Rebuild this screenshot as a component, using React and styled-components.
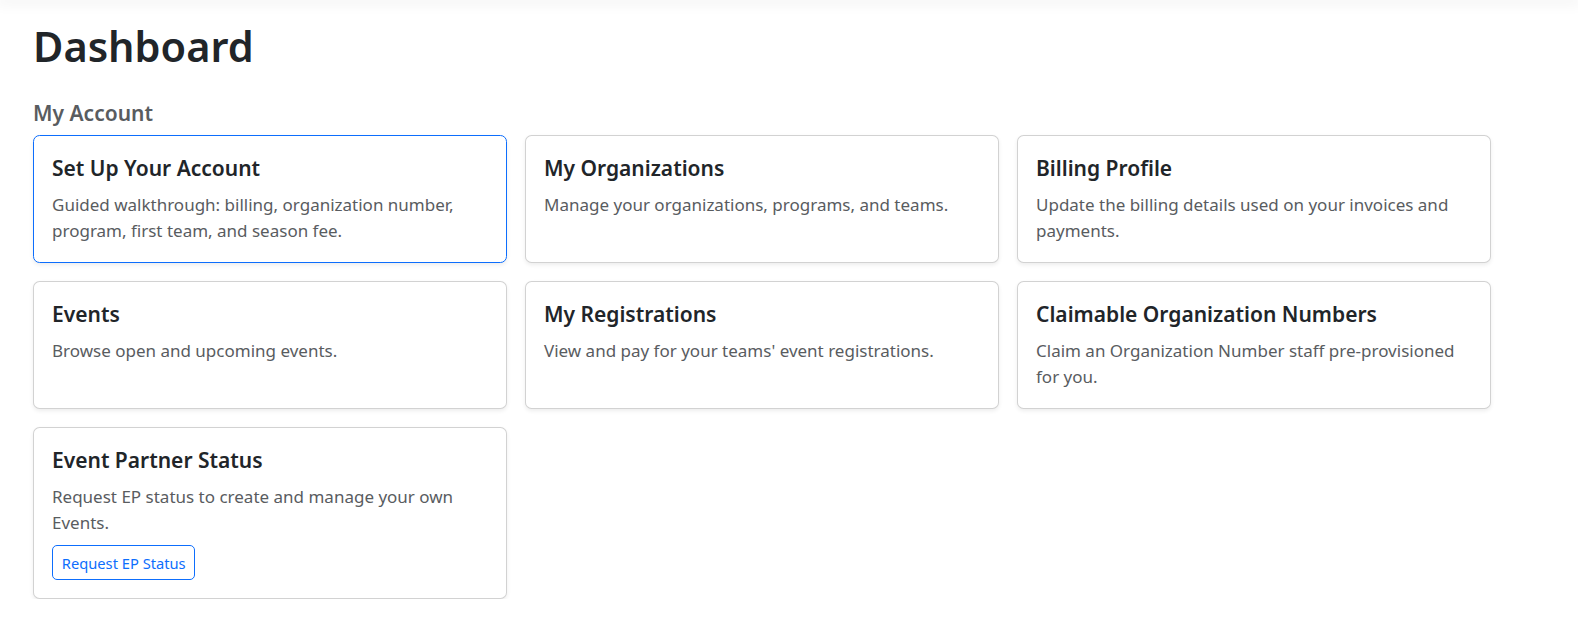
import React from 'react';
import styled, { createGlobalStyle } from 'styled-components';

const GlobalStyle = createGlobalStyle`
    * {
        box-sizing: border-box;
    }

    body {
        margin: 0;
        background: #fff;
        color: #212529;
        font-family: 'Segoe UI', 'Noto Sans', 'Open Sans', sans-serif;
        font-size: 17px;
        line-height: 1.5;
    }
`;

const cards = [
    {
        title: 'Set Up Your Account',
        text: 'Guided walkthrough: billing, organization number, program, first team, and season fee.',
        active: true
    },
    {
        title: 'My Organizations',
        text: 'Manage your organizations, programs, and teams.'
    },
    {
        title: 'Billing Profile',
        text: 'Update the billing details used on your invoices and payments.'
    },
    {
        title: 'Events',
        text: 'Browse open and upcoming events.'
    },
    {
        title: 'My Registrations',
        text: "View and pay for your teams' event registrations."
    },
    {
        title: 'Claimable Organization Numbers',
        text: 'Claim an Organization Number staff pre-provisioned for you.'
    },
    {
        title: 'Event Partner Status',
        text: 'Request EP status to create and manage your own Events.',
        action: 'Request EP Status'
    }
];

const App = () => {
    return (
        <>
            <GlobalStyle />
            <TopShadow />
            <Page>
                <PageTitle>Dashboard</PageTitle>
                <SectionTitle>My Account</SectionTitle>
                <CardGrid>
                    {cards.map((card) => (
                        <Card key={card.title} $active={card.active}>
                            <CardTitle>{card.title}</CardTitle>
                            <CardText>{card.text}</CardText>
                            {card.action && (
                                <OutlineButton type="button">{card.action}</OutlineButton>
                            )}
                        </Card>
                    ))}
                </CardGrid>
            </Page>
        </>
    );
};

export default App;

const TopShadow = styled.div`
    height: 0;
    box-shadow: 0 0 14px 4px rgba(0, 0, 0, 0.06);
`;

const Page = styled.main`
    padding: 19px 33px 0;
`;

const PageTitle = styled.h1`
    margin: 0 0 26px;
    font-size: 41.5px;
    font-weight: 600;
    line-height: 55px;
    color: #212529;
`;

const SectionTitle = styled.h5`
    margin: 0 0 8px;
    font-size: 21px;
    font-weight: 600;
    line-height: 27px;
    color: #595c5f;
`;

const CardGrid = styled.div`
    display: grid;
    grid-template-columns: repeat(3, 474px);
    gap: 18px;
`;

const Card = styled.div`
    display: flex;
    flex-direction: column;
    align-items: flex-start;
    padding: 18px 18px 17px;
    background: #fff;
    border: 1px solid ${(props) => (props.$active ? '#0d6efd' : 'rgba(0, 0, 0, 0.175)')};
    border-radius: 6.6px;
    box-shadow: 0 2px 4px rgba(0, 0, 0, 0.075);
`;

const CardTitle = styled.h5`
    margin: 0 0 10px;
    font-size: 21px;
    font-weight: 600;
    line-height: 28px;
    color: #212529;
`;

const CardText = styled.p`
    margin: 0;
    font-size: 17px;
    line-height: 26.4px;
    color: #595c5f;
`;

const OutlineButton = styled.button`
    margin: 9px 0 1px;
    height: 35px;
    padding: 0 8.8px;
    font-family: inherit;
    font-size: 14.7px;
    line-height: 1.5;
    color: #0d6efd;
    background: transparent;
    border: 1px solid #0d6efd;
    border-radius: 5px;
    cursor: pointer;
`;
